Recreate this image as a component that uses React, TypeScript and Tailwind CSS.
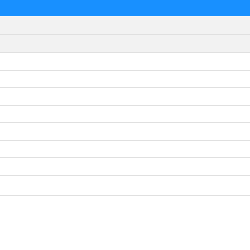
const rows = Array.from({ length: 7 }, (_, i) => i);

export default function App() {
  return (
    <div className="h-[250px] w-[250px] overflow-hidden bg-white font-['Liberation_Sans',sans-serif]">
      <header className="h-4 bg-[#1890ff]" />
      <div className="h-[19px] border-t border-b border-t-[#f7f7f7] border-b-[#e0e0e0] bg-[#f2f2f2]" />
      <div className="h-[18px] border-b border-[#e0e0e0] bg-[#f2f2f2]" />
      {rows.map((r) => (
        <div key={r} className="h-[17.5px] border-b border-[#e0e0e0]" />
      ))}
      <div className="h-[20px] border-b border-[#e0e0e0]" />
    </div>
  );
}
